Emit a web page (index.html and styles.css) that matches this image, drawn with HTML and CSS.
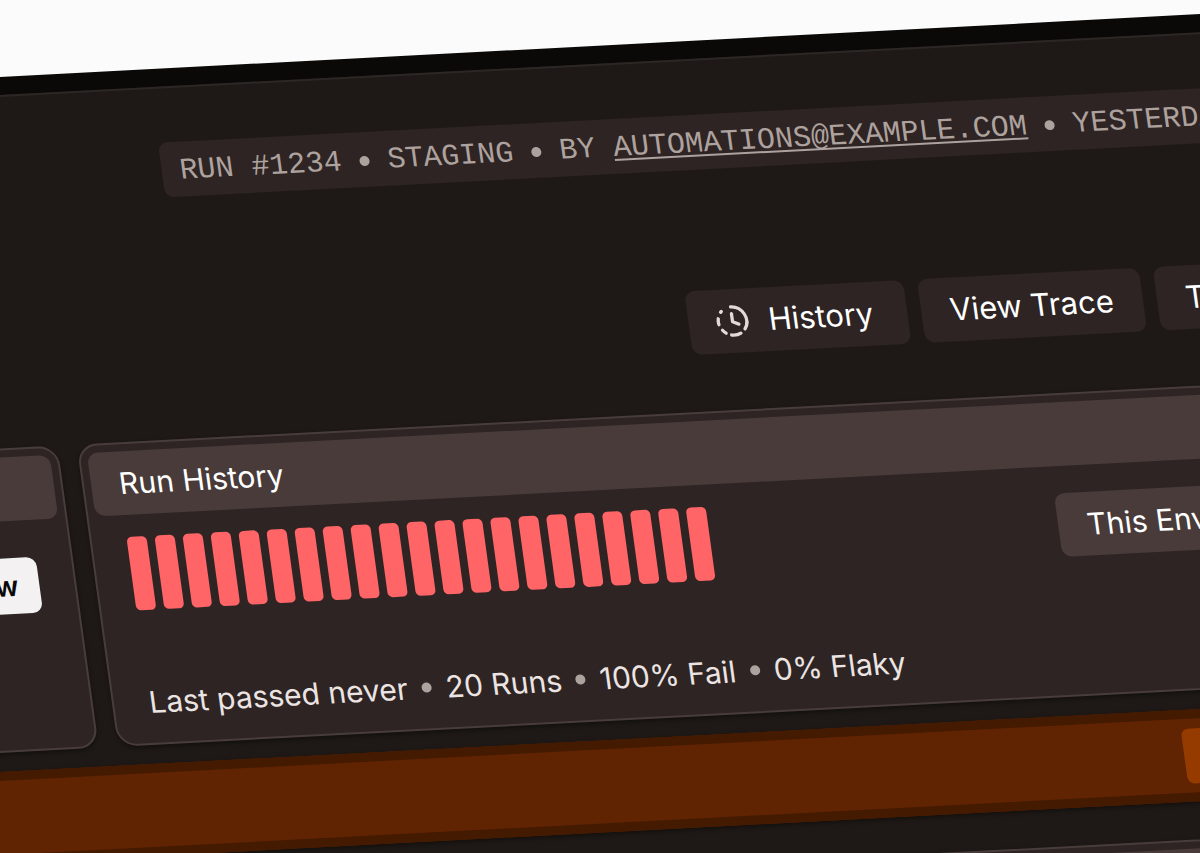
FILE: index.html
```html
<!DOCTYPE html>
<html lang="en">
<head>
<meta charset="utf-8">
<title>Run History</title>
<link rel="stylesheet" href="styles.css">
</head>
<body>
<div class="device">
  <main class="screen">
    <div class="crumbs">
      <span>RUN #1234</span><i class="dot"></i>
      <span>STAGING</span><i class="dot"></i>
      <span>BY</span><a class="crumb-link" href="#">AUTOMATIONS@EXAMPLE.COM</a><i class="dot"></i>
      <span>YESTERDAY</span>
    </div>

    <div class="actions">
      <button class="btn btn-icon" type="button">
        <svg class="icon" viewBox="0 0 24 24" fill="none" stroke="currentColor" stroke-width="2.200" stroke-linecap="round" stroke-linejoin="round" aria-hidden="true">
          <path d="M12 2.500a9.500 9.500 0 0 1 7.600 15.200"/>
          <path d="M16.500 20.400a9.500 9.500 0 0 1-6.300.9"/>
          <path d="M6.700 19.900a9.500 9.500 0 0 1-2.100-2.100"/>
          <path d="M2.700 14a9.500 9.500 0 0 1 .1-4"/>
          <path d="M4.900 5.800l.6-.6"/>
          <path d="M12 7v5.500l4 1.800"/>
        </svg>
        History
      </button>
      <button class="btn" type="button">View Trace</button>
      <button class="btn" type="button">Test</button>
    </div>

    <div class="cards">
      <section class="card">
        <div class="card-head"></div>
        <div class="review"><button class="btn-light" type="button">View</button></div>
      </section>
      <section class="card">
        <h2 class="card-head">Run History</h2>
        <div class="chart-row">
          <div class="bars">
            <i></i><i></i><i></i><i></i><i></i><i></i><i></i><i></i><i></i><i></i><i></i><i></i><i></i><i></i><i></i><i></i><i></i><i></i><i></i><i></i><i></i>
          </div>
          <button class="btn btn-raised" type="button">This Environment</button>
        </div>
        <div class="stats">
          <span>Last passed never</span><i class="dot"></i>
          <span>20 Runs</span><i class="dot"></i>
          <span>100% Fail</span><i class="dot"></i>
          <span>0% Flaky</span>
        </div>
      </section>
    </div>

    <div class="banner"><button class="btn-warn" type="button" aria-label="Open"></button></div>

    <section class="card card-next"><div class="card-head"></div></section>
  </main>
</div>
</body>
</html>
```
FILE: styles.css
```css
* { box-sizing: border-box; }

html, body { height: 100%; overflow: hidden; }

body {
  margin: 0;
  padding-top: 77px;
  background: #fbfbfb;
  font-family: Inter, "Liberation Sans", sans-serif;
  font-size: 30px;
  line-height: 36px;
  color: #fff;
}

button { font: inherit; color: inherit; border: 0; }

/* The device runs past the window on the left, right and bottom. */
.device {
  --bleed: 400px;
  width: calc(100vw + 2 * var(--bleed));
  margin-left: calc(-1 * var(--bleed));
  padding-top: 18px;
  background: #0a0908;
  transform-origin: var(--bleed) 0;
  transform: rotate(-3deg) skewX(4.8deg);
}

.screen {
  min-height: 110vh;
  padding-top: 54px;
  border-top: 2px solid #2c2624;
  background: #1e1916;
}

.crumbs {
  display: flex;
  align-items: center;
  gap: 18px;
  height: 55px;
  margin-left: calc(var(--bleed) + 148px);
  padding: 3px 18px 0;
  border-radius: 9px;
  background: #2d2423;
  color: #aea29f;
  font-family: "Liberation Mono", monospace;
  white-space: nowrap;
}

.crumb-link {
  color: inherit;
  text-decoration-thickness: 2px;
  text-underline-offset: 3px;
  text-decoration-skip-ink: none;
}

.dot {
  flex: none;
  width: 10px;
  height: 10px;
  border-radius: 50%;
  background: #aea29f;
}

.actions {
  display: flex;
  gap: 14px;
  margin-top: 121px;
  margin-left: calc(var(--bleed) + 651px);
  font-size: 31px;
}

.btn {
  display: flex;
  align-items: center;
  gap: 18px;
  height: 64px;
  padding: 0 29px;
  border-radius: 10px;
  background: #2d2423;
  white-space: nowrap;
}

.btn-icon { padding: 0 34px 0 26px; }

.btn-raised { background: #483b39; }

.icon { width: 36px; height: 36px; color: #e4d9d6; }

.cards {
  display: grid;
  grid-template-columns: calc(var(--bleed) + 7px) minmax(0, 1fr);
  gap: 19px;
  margin-top: 57px;
}

.card {
  height: 304px;
  padding: 7px;
  border: 2px solid #483d3b;
  border-radius: 20px;
  background: #2d2423;
  box-shadow: 0 2px 4px rgba(0, 0, 0, 0.4);
}

.card-head {
  height: 64px;
  margin: 0;
  padding: 14px 28px;
  border-radius: 11px;
  background: #483b39;
  font-size: 30px;
  font-weight: 400;
}

.review {
  display: flex;
  justify-content: flex-end;
  padding: 37px 28px 0;
}

.btn-light {
  height: 56px;
  padding: 0 21px;
  border-radius: 10px;
  background: #f3f1f2;
  color: #0a0908;
  font-size: 28px;
  font-weight: 600;
}

.chart-row {
  display: flex;
  align-items: center;
  gap: 348px;
  padding: 22px 28px 0;
}

.bars { display: flex; flex: none; gap: 8px; }

.bars i {
  width: 20px;
  height: 74px;
  border-radius: 5px;
  background: #ff6467;
}

.stats {
  display: flex;
  align-items: center;
  gap: 14px;
  padding: 74px 28px 0;
  color: #ece4e2;
  white-space: nowrap;
}

.banner {
  display: flex;
  align-items: center;
  height: 92px;
  margin-top: 19px;
  padding-left: calc(var(--bleed) + 1085px);
  border-top: 9px solid #441a00;
  border-bottom: 9px solid #441a00;
  background: #602402;
  box-shadow: 0 2px 4px rgba(0, 0, 0, 0.4);
}

.btn-warn {
  width: 260px;
  height: 55px;
  border-radius: 7px;
  background: #953b00;
}

.card-next { margin-top: 38px; }
```
